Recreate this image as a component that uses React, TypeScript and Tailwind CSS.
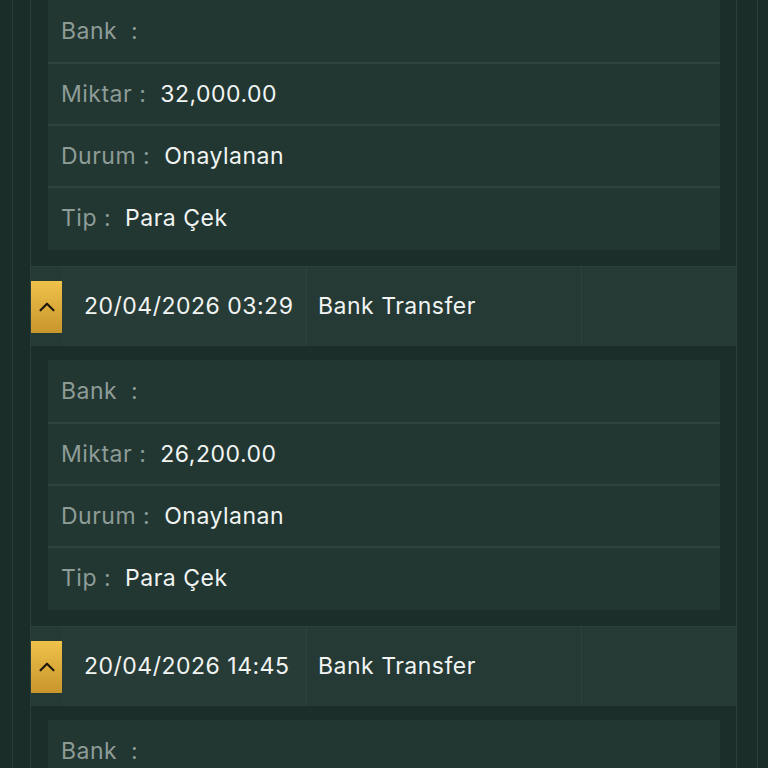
import { ChevronUp } from "lucide-react";

type Tx = {
  date?: string;
  method?: string;
  bank: string;
  amount: string;
  status: string;
  type: string;
};

const rows: Tx[] = [
  { bank: "", amount: "32,000.00", status: "Onaylanan", type: "Para Çek" },
  {
    date: "20/04/2026 03:29",
    method: "Bank Transfer",
    bank: "",
    amount: "26,200.00",
    status: "Onaylanan",
    type: "Para Çek",
  },
  {
    date: "20/04/2026 14:45",
    method: "Bank Transfer",
    bank: "",
    amount: "",
    status: "",
    type: "",
  },
];

function Header({ date, method }: { date: string; method: string }) {
  return (
    <div className="flex h-[80px] items-stretch border-t border-[#2b413b] bg-[#253a35] text-[23px] tracking-[0.5px] text-[#f1f4f2]">
      <div className="flex w-[31px] shrink-0 items-center">
        <button className="flex h-[52px] w-[31px] items-center justify-center bg-gradient-to-b from-[#efc24a] to-[#c8962c] text-[#1f1a0e]">
          <ChevronUp size={26} strokeWidth={2} />
        </button>
      </div>
      <div className="flex w-[244px] items-center bg-[#273c37] pl-[22px]">{date}</div>
      <div className="flex w-[275px] items-center border-l border-[#2c423c] pl-[11px]">
        {method}
      </div>
      <div className="flex-1 border-l border-[#2c423c]" />
    </div>
  );
}

function Row({ label, value, first }: { label: string; value: string; first?: boolean }) {
  return (
    <div
      className={`flex h-[62px] items-center pl-[13px] text-[23px] tracking-[0.5px] ${
        first ? "" : "border-t-2 border-[#2d433d]"
      }`}
    >
      <span className="whitespace-pre text-[#8e9c97]">{label}</span>
      <span className="ml-[14px] text-[#f1f4f2]">{value}</span>
    </div>
  );
}

function Details({ tx }: { tx: Tx }) {
  return (
    <div className="ml-[17px] mr-[16px] bg-[#223732] pb-[2px]">
      <Row first label="Bank  :" value={tx.bank} />
      <Row label="Miktar :" value={tx.amount} />
      <Row label="Durum :" value={tx.status} />
      <Row label="Tip :" value={tx.type} />
    </div>
  );
}

export default function App() {
  return (
    <div
      className="h-[768px] overflow-hidden bg-[#1a2d28] pl-[12px] pr-[10px]"
      style={{ fontFamily: "Inter, 'Noto Sans', sans-serif" }}
    >
      <div className="h-full border-x border-[#2a3f39] pl-[17px] pr-[20px]">
        <div className="h-full border-x border-[#2a403a] bg-[#1b2e29]">
          {rows.map((tx, i) => (
            <div key={i} className={i === 0 ? "" : "mt-[16px]"}>
              {tx.date && tx.method && (
                <div className="mb-[14px]">
                  <Header date={tx.date} method={tx.method} />
                </div>
              )}
              <Details tx={tx} />
            </div>
          ))}
        </div>
      </div>
    </div>
  );
}
